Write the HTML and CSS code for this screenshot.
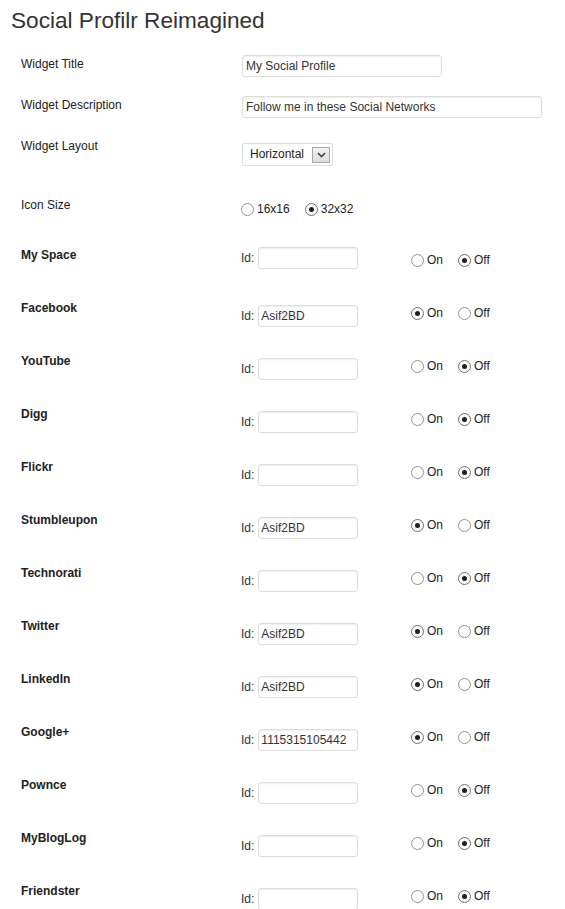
FILE: index.html
```html
<!DOCTYPE html>
<html lang="en">
<head>
<meta charset="utf-8">
<title>Social Profilr Reimagined</title>
<link rel="stylesheet" href="styles.css">
</head>
<body>
<h1 class="title">Social Profilr Reimagined</h1>
<form class="form">
  <div class="row row-title">
    <label class="label">Widget Title</label>
    <div class="field"><input class="text text-title" type="text" value="My Social Profile"></div>
  </div>
  <div class="row row-desc">
    <label class="label">Widget Description</label>
    <div class="field"><input class="text text-desc" type="text" value="Follow me in these Social Networks"></div>
  </div>
  <div class="row row-layout">
    <label class="label">Widget Layout</label>
    <div class="field field-select">
      <div class="select"><span class="select-value">Horizontal</span><span class="select-arrow"><svg width="9" height="6" viewBox="0 0 9 6"><path d="M1 1 L4.5 4.5 L8 1" fill="none" stroke="#444" stroke-width="1.6"/></svg></span></div>
    </div>
  </div>
  <div class="row row-size">
    <label class="label">Icon Size</label>
    <div class="field radios">
      <label class="opt"><input class="radio" type="radio" name="size">16x16</label>
      <label class="opt"><input class="radio" type="radio" name="size" checked>32x32</label>
    </div>
  </div>

  <div class="row social">
    <label class="label bold">My Space</label>
    <div class="field idgroup idgroup-up"><span class="idlabel">Id:</span><input class="text text-id" type="text" value=""></div>
    <div class="radios onoff"><label class="opt"><input class="radio" type="radio" name="s1">On</label><label class="opt"><input class="radio" type="radio" name="s1" checked>Off</label></div>
  </div>
  <div class="row social">
    <label class="label bold">Facebook</label>
    <div class="field idgroup"><span class="idlabel">Id:</span><input class="text text-id" type="text" value="Asif2BD"></div>
    <div class="radios onoff"><label class="opt"><input class="radio" type="radio" name="s2" checked>On</label><label class="opt"><input class="radio" type="radio" name="s2">Off</label></div>
  </div>
  <div class="row social">
    <label class="label bold">YouTube</label>
    <div class="field idgroup"><span class="idlabel">Id:</span><input class="text text-id" type="text" value=""></div>
    <div class="radios onoff"><label class="opt"><input class="radio" type="radio" name="s3">On</label><label class="opt"><input class="radio" type="radio" name="s3" checked>Off</label></div>
  </div>
  <div class="row social">
    <label class="label bold">Digg</label>
    <div class="field idgroup"><span class="idlabel">Id:</span><input class="text text-id" type="text" value=""></div>
    <div class="radios onoff"><label class="opt"><input class="radio" type="radio" name="s4">On</label><label class="opt"><input class="radio" type="radio" name="s4" checked>Off</label></div>
  </div>
  <div class="row social">
    <label class="label bold">Flickr</label>
    <div class="field idgroup"><span class="idlabel">Id:</span><input class="text text-id" type="text" value=""></div>
    <div class="radios onoff"><label class="opt"><input class="radio" type="radio" name="s5">On</label><label class="opt"><input class="radio" type="radio" name="s5" checked>Off</label></div>
  </div>
  <div class="row social">
    <label class="label bold">Stumbleupon</label>
    <div class="field idgroup"><span class="idlabel">Id:</span><input class="text text-id" type="text" value="Asif2BD"></div>
    <div class="radios onoff"><label class="opt"><input class="radio" type="radio" name="s6" checked>On</label><label class="opt"><input class="radio" type="radio" name="s6">Off</label></div>
  </div>
  <div class="row social">
    <label class="label bold">Technorati</label>
    <div class="field idgroup"><span class="idlabel">Id:</span><input class="text text-id" type="text" value=""></div>
    <div class="radios onoff"><label class="opt"><input class="radio" type="radio" name="s7">On</label><label class="opt"><input class="radio" type="radio" name="s7" checked>Off</label></div>
  </div>
  <div class="row social">
    <label class="label bold">Twitter</label>
    <div class="field idgroup"><span class="idlabel">Id:</span><input class="text text-id" type="text" value="Asif2BD"></div>
    <div class="radios onoff"><label class="opt"><input class="radio" type="radio" name="s8" checked>On</label><label class="opt"><input class="radio" type="radio" name="s8">Off</label></div>
  </div>
  <div class="row social">
    <label class="label bold">LinkedIn</label>
    <div class="field idgroup"><span class="idlabel">Id:</span><input class="text text-id" type="text" value="Asif2BD"></div>
    <div class="radios onoff"><label class="opt"><input class="radio" type="radio" name="s9" checked>On</label><label class="opt"><input class="radio" type="radio" name="s9">Off</label></div>
  </div>
  <div class="row social">
    <label class="label bold">Google+</label>
    <div class="field idgroup"><span class="idlabel">Id:</span><input class="text text-id" type="text" value="1115315105442"></div>
    <div class="radios onoff"><label class="opt"><input class="radio" type="radio" name="s10" checked>On</label><label class="opt"><input class="radio" type="radio" name="s10">Off</label></div>
  </div>
  <div class="row social">
    <label class="label bold">Pownce</label>
    <div class="field idgroup"><span class="idlabel">Id:</span><input class="text text-id" type="text" value=""></div>
    <div class="radios onoff"><label class="opt"><input class="radio" type="radio" name="s11">On</label><label class="opt"><input class="radio" type="radio" name="s11" checked>Off</label></div>
  </div>
  <div class="row social">
    <label class="label bold">MyBlogLog</label>
    <div class="field idgroup"><span class="idlabel">Id:</span><input class="text text-id" type="text" value=""></div>
    <div class="radios onoff"><label class="opt"><input class="radio" type="radio" name="s12">On</label><label class="opt"><input class="radio" type="radio" name="s12" checked>Off</label></div>
  </div>
  <div class="row social">
    <label class="label bold">Friendster</label>
    <div class="field idgroup"><span class="idlabel">Id:</span><input class="text text-id" type="text" value=""></div>
    <div class="radios onoff"><label class="opt"><input class="radio" type="radio" name="s13">On</label><label class="opt"><input class="radio" type="radio" name="s13" checked>Off</label></div>
  </div>
</form>
</body>
</html>
```
FILE: styles.css
```css
* { box-sizing: border-box; }

body {
  margin: 0;
  background: #fff;
  font-family: "Liberation Sans", Arial, sans-serif;
  font-size: 12px;
  line-height: 15px;
  color: #222;
}

.title {
  margin: 0;
  padding: 7px 0 0 11px;
  font-size: 22.6px;
  line-height: 28px;
  font-weight: normal;
  color: #333;
}

.form {
  padding: 20px 0 0 21px;
}

.row {
  display: flex;
  align-items: flex-start;
}

.label {
  width: 220px;
  flex: none;
}
.bold { font-weight: bold; }

.row-title { height: 41px; }
.row-desc { height: 43px; }
.row-layout { height: 59px; }
.row-size { height: 50px; }
.social { height: 53px; }

.row-title .label,
.row-desc .label { margin-top: 2px; }

.text {
  display: block;
  height: 22px;
  margin: 0;
  padding: 0 3px;
  border: 1px solid #ddd;
  border-radius: 3px;
  box-shadow: inset 0 1px 2px rgba(0,0,0,0.07);
  background: #fff;
  font-family: "Liberation Sans", Arial, sans-serif;
  font-size: 12px;
  color: #333;
  outline: none;
}
.text-title { width: 200px; margin-left: 1px; }
.text-desc { width: 300px; margin-left: 1px; }
.text-id { width: 100px; padding-left: 2px; }

.field-select { margin-top: 4px; }
.select {
  display: flex;
  align-items: center;
  width: 91px;
  height: 23px;
  margin-left: 1px;
  padding-left: 7px;
  border: 1px solid #ddd;
  border-radius: 2px;
  background: #fff;
  color: #222;
}
.select-arrow {
  margin-left: auto;
  margin-right: 2px;
  width: 18px;
  height: 16px;
  display: flex;
  align-items: center;
  justify-content: center;
  border: 1px solid #a9a9a9;
  background: linear-gradient(#f2f2f2, #dcdcdc);
}

.radios {
  display: flex;
  gap: 15px;
  height: 15px;
}
.row-size .radios { margin-top: 4px; }
.opt {
  display: flex;
  align-items: center;
  gap: 3px;
  height: 15px;
}
.radio {
  appearance: none;
  -webkit-appearance: none;
  width: 13px;
  height: 13px;
  margin: 0;
  border: 1px solid #8f8f8f;
  border-radius: 50%;
  background: #fff;
  display: grid;
  place-items: center;
}
.radio:checked::before {
  content: "";
  width: 5px;
  height: 5px;
  border-radius: 50%;
  background: #1e1e1e;
}
.radio:checked { border-color: #6d6d6d; }

.idgroup {
  display: flex;
  align-items: baseline;
  gap: 4px;
  width: 170px;
  flex: none;
  margin-top: 4px;
}
.idgroup-up { margin-top: -1px; }
.idlabel { color: #333; }

.onoff { margin-top: 5px; }
```
